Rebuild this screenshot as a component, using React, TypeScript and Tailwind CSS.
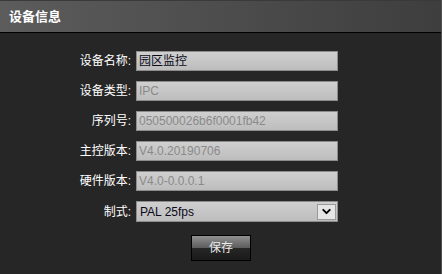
import { ChevronDown } from "lucide-react";

const FONT = "font-['Liberation_Sans','Noto_Sans_CJK_SC',sans-serif]";

interface Field {
  label: string;
  value: string;
  editable?: boolean;
}

const FIELDS: Field[] = [
  { label: "设备名称:", value: "园区监控", editable: true },
  { label: "设备类型:", value: "IPC" },
  { label: "序列号:", value: "050500026b6f0001fb42" },
  { label: "主控版本:", value: "V4.0.20190706" },
  { label: "硬件版本:", value: "V4.0-0.0.0.1" },
];

export default function App() {
  return (
    <div className={`${FONT} flex h-[274px] w-[442px] flex-col bg-[#262626] border-r border-[#505050]`}>
      <div className="flex h-[33px] items-center border-t border-[#3a3a3a] border-b border-b-black bg-gradient-to-r from-[#5c5c5c] to-[#3e3e3e] pl-[9px]">
        <span className="text-[13px] font-bold text-white">设备信息</span>
      </div>

      <div className="flex flex-col gap-[10px] pt-[18px]">
        {FIELDS.map((f) => (
          <Row key={f.label} label={f.label}>
            <div className="flex h-[20px] w-[202px] items-center border border-[#8c8c8c] bg-gradient-to-b from-[#cfcfcf] to-[#bdbdbd] px-[2px]">
              <span className={`text-[12px] leading-none ${f.editable ? "text-[#0a0a1a]" : "text-[#8a8a8a]"}`}>
                {f.value}
              </span>
            </div>
          </Row>
        ))}

        <Row label="制式:">
          <div className="flex h-[21px] w-[202px] items-center justify-between border border-[#8c8c8c] bg-gradient-to-b from-[#cfcfcf] to-[#bdbdbd] pl-[3px] pr-[1px]">
            <span className="text-[12px] leading-none text-[#0a0a1a]">PAL 25fps</span>
            <span className="flex h-[16px] w-[19px] items-center justify-center border border-[#9a9a9a] bg-[#e6e6e6]">
              <ChevronDown size={13} strokeWidth={3.5} className="text-black" />
            </span>
          </div>
        </Row>
      </div>

      <div className="flex justify-center pt-[13px] pl-[1px]">
        <button
          type="button"
          className="h-[26px] w-[60px] border border-black bg-[linear-gradient(to_bottom,#909090_0%,#5e5e5e_48%,#262626_52%,#1a1a1a_100%)] text-[12px] text-[#e8e8e8]"
        >
          保存
        </button>
      </div>
    </div>
  );
}

function Row({ label, children }: { label: string; children: React.ReactNode }) {
  return (
    <div className="flex items-center">
      <span className="w-[132px] pr-[1px] text-right text-[12px] text-white">{label}</span>
      <div className="ml-[4px]">{children}</div>
    </div>
  );
}
